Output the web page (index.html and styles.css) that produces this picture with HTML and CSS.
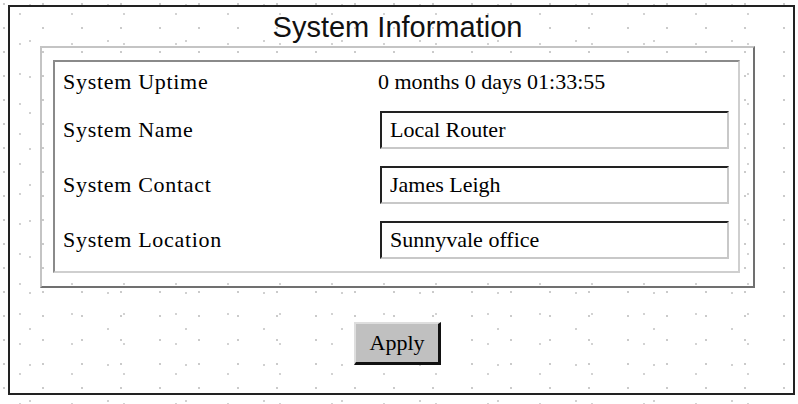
FILE: index.html
```html
<!DOCTYPE html>
<html>
<head>
<meta charset="utf-8">
<title>System Information</title>
<link rel="stylesheet" href="styles.css">
</head>
<body>
<div class="frame">
  <div class="title">System Information</div>
  <div class="group">
    <div class="panel">
      <div class="label">System Uptime</div>
      <div class="value">0 months 0 days 01:33:55</div>
      <div class="label">System Name</div>
      <div class="field"><input class="input" type="text" value="Local Router"></div>
      <div class="label">System Contact</div>
      <div class="field"><input class="input" type="text" value="James Leigh"></div>
      <div class="label">System Location</div>
      <div class="field"><input class="input" type="text" value="Sunnyvale office"></div>
    </div>
  </div>
  <div class="actions">
    <button class="btn" type="button">Apply</button>
  </div>
</div>
</body>
</html>
```
FILE: styles.css
```css
html, body {
  margin: 0;
  padding: 0;
}
body {
  width: 798px;
  height: 404px;
  overflow: hidden;
  background-color: #fff;
  background-image:
    radial-gradient(circle at 4px 4px, #cacaca 0.7px, transparent 1.3px),
    radial-gradient(circle at 20px 14px, #d2d2d2 0.7px, transparent 1.3px),
    radial-gradient(circle at 30px 5px, #d0d0d0 0.7px, transparent 1.3px);
  background-size: 39px 24px, 52px 30px, 78px 36px;
}
.frame {
  box-sizing: border-box;
  margin: 5px 0 0 8px;
  width: 787px;
  height: 390px;
  border: 2px solid #222;
  display: flex;
  flex-direction: column;
}
.title {
  margin: 4px 38px 0 30px;
  text-align: center;
  font-family: "Liberation Sans", Arial, sans-serif;
  font-size: 29px;
  line-height: 33px;
  color: #111;
}
.group {
  margin: 2px 38px 0 30px;
  padding: 12px 13px 13px 11px;
  border: 2px solid;
  border-color: #c4c4c4 #707070 #707070 #c4c4c4;
}
.panel {
  background: #fff;
  border: 2px solid;
  border-color: #8a8a8a #cfcfcf #cfcfcf #8a8a8a;
  display: grid;
  grid-template-columns: 323px 1fr;
  grid-template-rows: 40px 55px 55px 55px;
  align-items: center;
  padding-bottom: 4px;
  font-family: "Liberation Serif", "Times New Roman", serif;
  color: #000;
}
.label {
  padding-left: 8px;
  font-size: 22px;
  letter-spacing: 0.7px;
}
.value {
  font-size: 22px;
}
.field {
  padding: 0 9px 0 2px;
}
.input {
  box-sizing: border-box;
  display: block;
  width: 100%;
  height: 38px;
  margin: 0;
  padding: 0 8px;
  border: 2px solid;
  border-color: #222 #c8c8c8 #c8c8c8 #222;
  background: #fff;
  font-family: "Liberation Serif", "Times New Roman", serif;
  font-size: 22px;
  color: #000;
  outline: none;
}
.actions {
  margin: 34px 38px 0 30px;
  text-align: center;
}
.btn {
  box-sizing: border-box;
  width: 87px;
  height: 43px;
  margin: 0;
  padding: 0;
  background: #c0c0c0;
  border-style: solid;
  border-width: 2px 3px 3px 2px;
  border-color: #dedede #111 #111 #dedede;
  font-family: "Liberation Serif", "Times New Roman", serif;
  font-size: 22px;
  color: #000;
}
```
